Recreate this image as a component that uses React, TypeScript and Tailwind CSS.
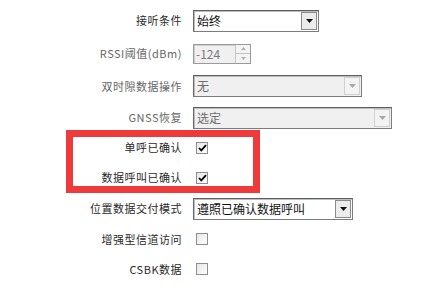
import React from "react";

type Row =
  | { label: string; muted?: boolean; h: string; kind: "select"; value: string; width: string; disabled?: boolean }
  | { label: string; muted?: boolean; h: string; kind: "spin"; value: string }
  | { label: string; muted?: boolean; h: string; kind: "check"; checked: boolean };

const rows: Row[] = [
  { label: "接听条件", h: "h-[33px]", kind: "select", value: "始终", width: "w-[126px]" },
  { label: "RSSI阈值(dBm)", muted: true, h: "h-[33px]", kind: "spin", value: "-124" },
  { label: "双时隙数据操作", muted: true, h: "h-[32px]", kind: "select", value: "无", width: "w-[169px]", disabled: true },
  { label: "GNSS恢复", muted: true, h: "h-[31px]", kind: "select", value: "选定", width: "w-[199px]", disabled: true },
  { label: "单呼已确认", h: "h-[29px]", kind: "check", checked: true },
  { label: "数据呼叫已确认", h: "h-[31px]", kind: "check", checked: true },
  { label: "位置数据交付模式", h: "h-[31px]", kind: "select", value: "遵照已确认数据呼叫", width: "w-[160px]" },
  { label: "增强型信道访问", h: "h-[30px]", kind: "check", checked: false },
  { label: "CSBK数据", h: "h-[30px]", kind: "check", checked: false },
];

function Arrow({ disabled }: { disabled?: boolean }) {
  return (
    <svg width="7" height="4" viewBox="0 0 7 4">
      <path d="M0 0H7L3.5 4Z" fill={disabled ? "#a8a8a8" : "#111"} />
    </svg>
  );
}

function Select({ value, width, disabled }: { value: string; width: string; disabled?: boolean }) {
  return (
    <div
      className={`${width} h-[22px] flex items-center border border-[#7c7c7c] border-t-[#5e5e5e] border-l-[#6a6a6a] shadow-[inset_1px_1px_0_#bdbdbd] ${
        disabled ? "bg-[#f0f0f0] text-[#6d6d6d]" : "bg-white text-[#111]"
      }`}
    >
      <span className="flex-1 pl-[3px] text-[12px] leading-none">{value}</span>
      <div
        className={`w-[16px] h-[18px] mr-[1px] flex items-center justify-center border ${
          disabled ? "border-[#cfcfcf] bg-[#f3f3f3]" : "border-[#8a8a8a] bg-[#ececec]"
        }`}
      >
        <Arrow disabled={disabled} />
      </div>
    </div>
  );
}

function Spin({ value }: { value: string }) {
  return (
    <div className="w-[58px] h-[20px] flex items-center border border-[#9a9a9a] bg-[#f0f0f0] shadow-[inset_1px_1px_0_#d0d0d0]">
      <span className="flex-1 pl-[2px] text-[12px] leading-none text-[#7a7a7a]">{value}</span>
      <div className="w-[15px] h-[18px] flex flex-col border-l border-[#c4c4c4]">
        <div className="flex-1 flex items-center justify-center border-b border-[#c4c4c4] bg-[#f4f4f4]">
          <svg width="5" height="3" viewBox="0 0 5 3"><path d="M0 3H5L2.5 0Z" fill="#b0b0b0" /></svg>
        </div>
        <div className="flex-1 flex items-center justify-center bg-[#f4f4f4]">
          <svg width="5" height="3" viewBox="0 0 5 3"><path d="M0 0H5L2.5 3Z" fill="#b0b0b0" /></svg>
        </div>
      </div>
    </div>
  );
}

function Check({ checked }: { checked: boolean }) {
  return (
    <div className="ml-[3px] w-[12px] h-[12px] border border-[#8e8e8e] bg-gradient-to-br from-[#e6e6e6] to-white flex items-center justify-center">
      {checked && (
        <svg width="9" height="8" viewBox="0 0 9 8">
          <path d="M1 4L3.3 6.4L8 1.2" fill="none" stroke="#000" strokeWidth="1.8" />
        </svg>
      )}
    </div>
  );
}

export default function App() {
  return (
    <div
      className="relative w-[440px] h-[291px] bg-white pt-[4px] overflow-hidden"
      style={{ fontFamily: '"Noto Sans CJK SC", "Liberation Sans", sans-serif' }}
    >
      {rows.map((r, i) => (
        <div key={i} className={`flex items-center ${r.h}`}>
          <div
            className={`w-[182px] text-right text-[11px] tracking-[0.5px] leading-none ${
              r.muted ? "text-[#666]" : "text-[#2a2a2a]"
            }`}
          >
            {r.label}
          </div>
          <div className="ml-[11px] flex items-center">
            {r.kind === "select" && <Select value={r.value} width={r.width} disabled={r.disabled} />}
            {r.kind === "spin" && <Spin value={r.value} />}
            {r.kind === "check" && <Check checked={r.checked} />}
          </div>
        </div>
      ))}

      {/* annotation box */}
      <div className="absolute left-[66px] top-[130px] w-[194px] h-[63px] border-[7px] border-[#ee3a3a] pointer-events-none" />
    </div>
  );
}
